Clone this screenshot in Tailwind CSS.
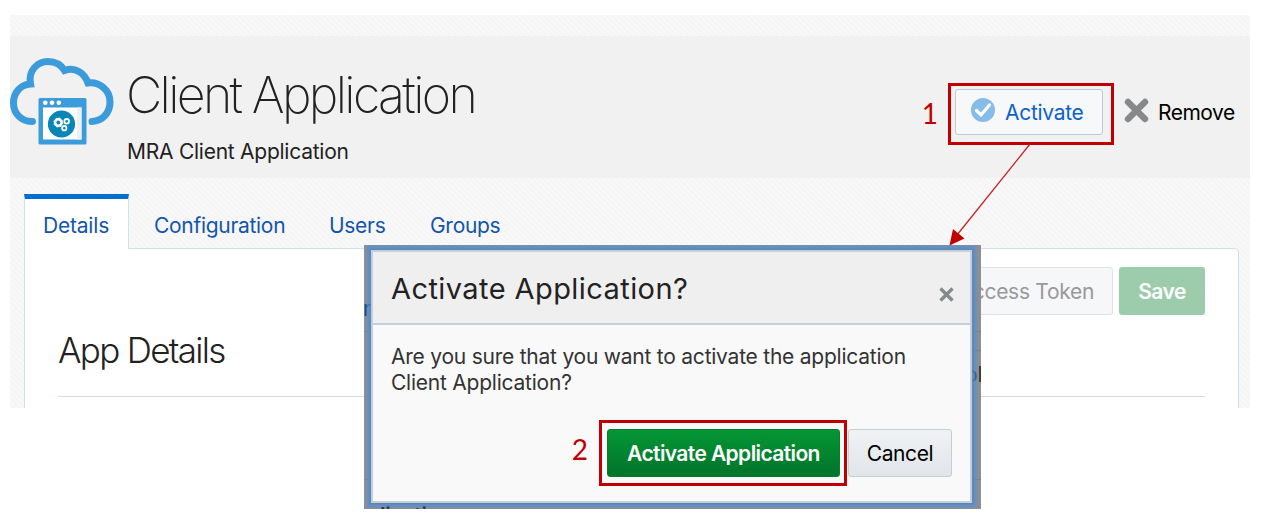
<!DOCTYPE html>
<html lang="en">
<head>
<meta charset="utf-8">
<title>Client Application</title>
<script src="https://cdn.jsdelivr.net/npm/@tailwindcss/browser@4"></script>
</head>
<body class="relative h-[524px] w-[1262px] overflow-hidden bg-white font-['Inter','Liberation_Sans',sans-serif] text-[21px] leading-[26px] text-[#222]">

<main class="ml-[10px] mt-[15px] flex h-[393px] w-[1240px] flex-col overflow-hidden bg-[repeating-linear-gradient(45deg,#f8f8f8_0px,#f8f8f8_2px,#f5f5f5_2px,#f5f5f5_4px)]">
  <header class="mt-[21px] flex h-[142px] shrink-0 items-start bg-[#f1f1f1]">
    <svg class="mt-[20px] h-[92px] w-[106px] shrink-0" viewBox="10 56 106 92" fill="none">
      <path d="M32.500 121.500C21 122 13.500 113 13.500 103C13.500 92 21 84.500 30.500 84C28 71 37 61.500 48 61.500C56 61.500 61.500 65.500 64.500 70.500C75 66.500 84.500 73 88 83C100 81.500 110 90.500 110 102C110 113 102.500 121 92 121.500" stroke="#3c9bda" stroke-width="7" stroke-linecap="round" stroke-linejoin="miter"/>
      <rect x="38.500" y="98" width="48" height="46.500" rx="1.500" fill="#3c9bda"/>
      <path d="M43 107.500H81.500V139.500H43Z" fill="#fff"/>
      <path d="M77 107.500H81.500V139.500H77Z" fill="#edf1f4"/>
      <g fill="#fff"><circle cx="45.300" cy="102.800" r="2.300"/><circle cx="52" cy="102.800" r="2.300"/><circle cx="58.800" cy="102.800" r="2.300"/></g>
      <circle cx="61.500" cy="124" r="13.600" fill="#0886b5"/>
      <g stroke="#fff"><circle cx="58.300" cy="122.500" r="3.200" stroke-width="2.500"/><circle cx="58.300" cy="122.500" r="4.500" stroke-width="1" stroke-dasharray="1.800 1.730"/><circle cx="66.700" cy="121.300" r="2.300" stroke-width="1.800"/><circle cx="64.300" cy="128.200" r="2.200" stroke-width="1.800"/></g>
    </svg>
    <div class="ml-[10px] mt-[30px] grow">
      <h1 class="h-[58px] whitespace-nowrap text-[50px] font-extralight leading-[58px] tracking-[-2.650px]">Client Application</h1>
      <p class="mt-[15px] whitespace-nowrap pl-px tracking-[-0.250px]">MRA Client Application</p>
    </div>
    <span class="mt-[64px] mr-[10px] font-['Lato',sans-serif] text-[28px] text-[#c00000]">1</span>
    <div class="mt-[47px] h-[62px] w-[166px] shrink-0 border-[3px] border-[#c00000] pl-[4px] pt-[3px]">
      <button class="flex h-[46px] w-[148px] items-center rounded-[3px] border border-[#c0ccd8] bg-[#f7f8fa] pl-[15px] text-[#0d62ca]">
        <svg class="-mt-[5px] mr-[10px] size-[24px] shrink-0" viewBox="0 0 24 24" fill="none"><circle cx="12" cy="12" r="12" fill="#86bce8"/><path d="M5.500 12.500L10 17L18.500 7" stroke="#fff" stroke-width="3.200" stroke-linecap="round"/></svg>
        <span class="mt-[2px] tracking-[-0.3px]">Activate</span>
      </button>
    </div>
    <button class="mt-[64px] ml-[10px] mr-[15px] flex w-[111px] shrink-0 items-center text-black">
      <svg class="-mt-[6px] mr-[9px] size-[25px] shrink-0" viewBox="0 0 25 25"><path d="M4 4L21 21M21 4L4 21" stroke="#86898b" stroke-width="6.400" stroke-linecap="round"/></svg>
      <span class="tracking-[-0.5px]">Remove</span>
    </button>
  </header>

  <nav class="relative z-10 ml-[14px] mt-[16px] flex h-[55px] shrink-0 text-[#1256ab]">
    <a class="h-[55px] w-[105px] whitespace-nowrap border-x border-t-[5px] border-x-[#d3dfe9] border-t-[#056ed3] bg-white pl-[18px] pt-[14px] tracking-[-0.2px]">Details</a>
    <a class="ml-[25px] w-[175px] pt-[19px] tracking-[-0.3px]">Configuration</a>
    <a class="w-[101px] pt-[19px] tracking-[-0.3px]">Users</a>
    <a class="pt-[19px] tracking-[-0.3px]">Groups</a>
  </nav>
  <section class="-mt-px ml-[14px] h-[170px] w-[1215px] shrink-0 rounded-tr-[4px] border border-[#d1dfe8] bg-white pl-[34px] pr-[33px] pt-[18px]">
    <div class="flex h-[48px] justify-end gap-[6px]">
      <button class="w-[210px] rounded-[3px] border border-[#dce3ea] bg-[#f5f7f9] pr-[18px] pt-px text-right tracking-[-0.3px] text-[#999]">Access Token</button>
      <button class="w-[86px] rounded-[3px] bg-[#9dccac] pt-px font-semibold tracking-[-0.5px] text-white">Save</button>
    </div>
    <h2 class="-ml-px h-[82px] border-b border-[#cfdfe6] pt-[14px] text-[35px] font-light leading-[42px] tracking-[-1.7px]">App Details</h2>
  </section>
</main>

<div class="absolute left-[364px] top-[245px] h-[264px] w-[617px] overflow-hidden bg-[#8f8f8f]">
  <span class="absolute -left-px top-[51px] text-[#16427c]">n</span>
  <i class="absolute left-0 top-[86px] h-px w-full bg-[#808285]"></i>
  <i class="absolute right-0 top-[105px] h-px w-[12px] bg-[#808285]"></i>
  <i class="absolute left-0 top-[234px] h-px w-full bg-[#808285]"></i>
  <span class="absolute left-[601px] top-[117px] text-[#333]">ol</span>
  <span class="absolute left-[16px] top-[258px] font-semibold tracking-[-0.3px] text-[#222]">lication</span>
  <div class="absolute left-[7px] top-[5px] flex h-[253px] w-[601px] flex-col border-2 border-[#c4cfdb] bg-[#f9f9f9] shadow-[0_0_1px_1px_#75787c80,0_0_3px_4px_#4690e4c8]">
    <div class="flex h-[73px] shrink-0 items-start border-b-2 border-[#c4cfdb] bg-[#efefef] pl-[18px] pt-[18px]">
      <h3 class="grow whitespace-nowrap text-[29px] leading-[38px] tracking-[0.420px]">Activate Application?</h3>
      <svg class="mr-[16px] mt-[17px] size-[15px]" viewBox="0 0 15 15"><path d="M1.500 1.500L13.500 13.500M13.500 1.500L1.500 13.500" stroke="#858a8d" stroke-width="3.300"/></svg>
    </div>
    <p class="h-[95px] shrink-0 whitespace-nowrap pl-[18px] pt-[19px] leading-[25.500px] tracking-[-0.230px] text-[#333]">Are you sure that you want to activate the application<br>Client Application?</p>
    <div class="flex items-start justify-end pr-[18px]">
      <span class="mr-[11px] mt-[16px] font-['Lato',sans-serif] text-[28px] text-[#c00000]">2</span>
      <div class="h-[66px] w-[248px] border-[3px] border-[#c00000] p-[5px] pt-[6px]">
        <button class="h-[48px] w-[233px] whitespace-nowrap rounded-[3px] border border-[#06802f] bg-linear-to-b from-[#049635] to-[#02742a] pt-[2px] font-semibold tracking-[-0.6px] text-white">Activate Application</button>
      </div>
      <button class="ml-px mt-[9px] h-[48px] w-[104px] rounded-[3px] border border-[#c4ced7] bg-linear-to-b from-[#f0f2f4] to-[#e1e5e9] pt-[2px] tracking-[-0.4px] text-black">Cancel</button>
    </div>
  </div>
</div>

<svg class="absolute left-[940px] top-[140px] h-[110px] w-[100px]" viewBox="940 140 100 110"><path d="M1030 144L957 235" stroke="#c62222" stroke-width="1.300"/><path d="M949.500 245.500L953 229L964.500 238.500Z" fill="#c00000"/></svg>
</body>
</html>
